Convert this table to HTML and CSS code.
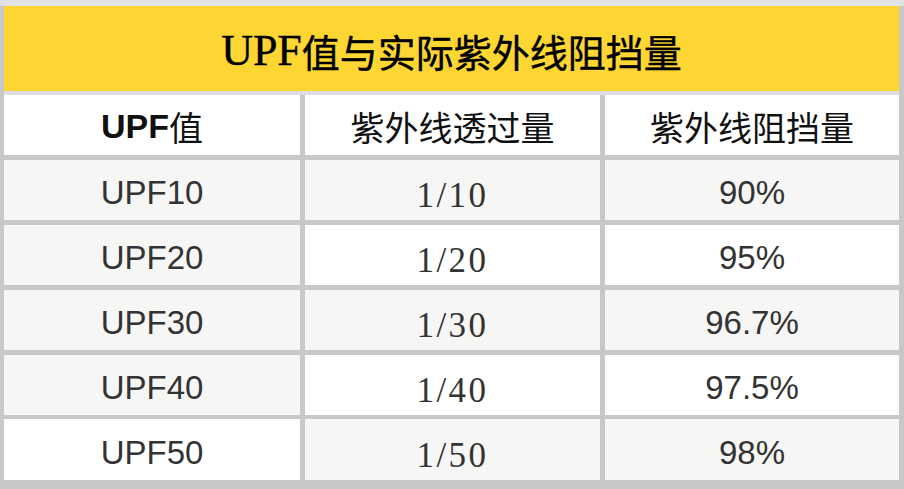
FILE: index.html
```html
<!DOCTYPE html>
<html lang="zh">
<head>
<meta charset="utf-8">
<title>UPF值与实际紫外线阻挡量</title>
<link rel="stylesheet" href="styles.css">
</head>
<body>
<div class="page">
  <div class="title"><span class="title-latin">UPF</span>值与实际紫外线阻挡量</div>
  <div class="grid">
    <div class="cell head"><b class="bold">UPF</b>值</div>
    <div class="cell head">紫外线透过量</div>
    <div class="cell head">紫外线阻挡量</div>

    <div class="cell gray sans">UPF10</div>
    <div class="cell gray serif">1/10</div>
    <div class="cell gray sans">90%</div>

    <div class="cell gray sans">UPF20</div>
    <div class="cell serif">1/20</div>
    <div class="cell sans">95%</div>

    <div class="cell gray sans">UPF30</div>
    <div class="cell gray serif">1/30</div>
    <div class="cell gray sans">96.7%</div>

    <div class="cell gray sans">UPF40</div>
    <div class="cell serif">1/40</div>
    <div class="cell sans">97.5%</div>

    <div class="cell sans">UPF50</div>
    <div class="cell gray serif">1/50</div>
    <div class="cell gray sans">98%</div>
  </div>
</div>
</body>
</html>
```

FILE: styles.css
```css
html, body {
  margin: 0;
  padding: 0;
}
body {
  background: #c8c8c8;
  width: 904px;
  height: 489px;
  overflow: hidden;
}
.page {
  border-top: 6px solid #e1e2e4;
}
.title {
  margin: 0 5px 0 4px;
  height: 89px;
  background: #fdd633;
  border-bottom: 4px solid #dcdde0;
  display: flex;
  align-items: center;
  justify-content: center;
  font-family: "Liberation Serif", "Noto Sans CJK SC", serif;
  font-size: 38px;
  color: #000;
  padding-top: 4px;
  box-sizing: border-box;
  -webkit-text-stroke: 0.4px #000;
}
.title-latin {
  font-size: 44px;
}
.grid {
  display: grid;
  grid-template-columns: 296px 295px 294px;
  grid-auto-rows: 60.4px;
  column-gap: 5px;
  row-gap: 4.5px;
  padding: 0 5px 5px 4px;
}
.cell {
  background: #ffffff;
  display: flex;
  align-items: center;
  justify-content: center;
  color: #333;
}
.gray {
  background: #f6f6f4;
}
.head {
  font-family: "Liberation Sans", "Noto Sans CJK SC", sans-serif;
  font-size: 34px;
  color: #111;
  padding-top: 2px;
}
.bold {
  font-weight: bold;
}
.sans {
  font-family: "Liberation Sans", "Noto Sans CJK SC", sans-serif;
  font-size: 33px;
  padding-top: 6px;
}
.serif {
  font-family: "Liberation Serif", "Noto Serif CJK SC", serif;
  font-size: 35px;
  letter-spacing: 2.5px;
  padding-top: 12px;
}
```
